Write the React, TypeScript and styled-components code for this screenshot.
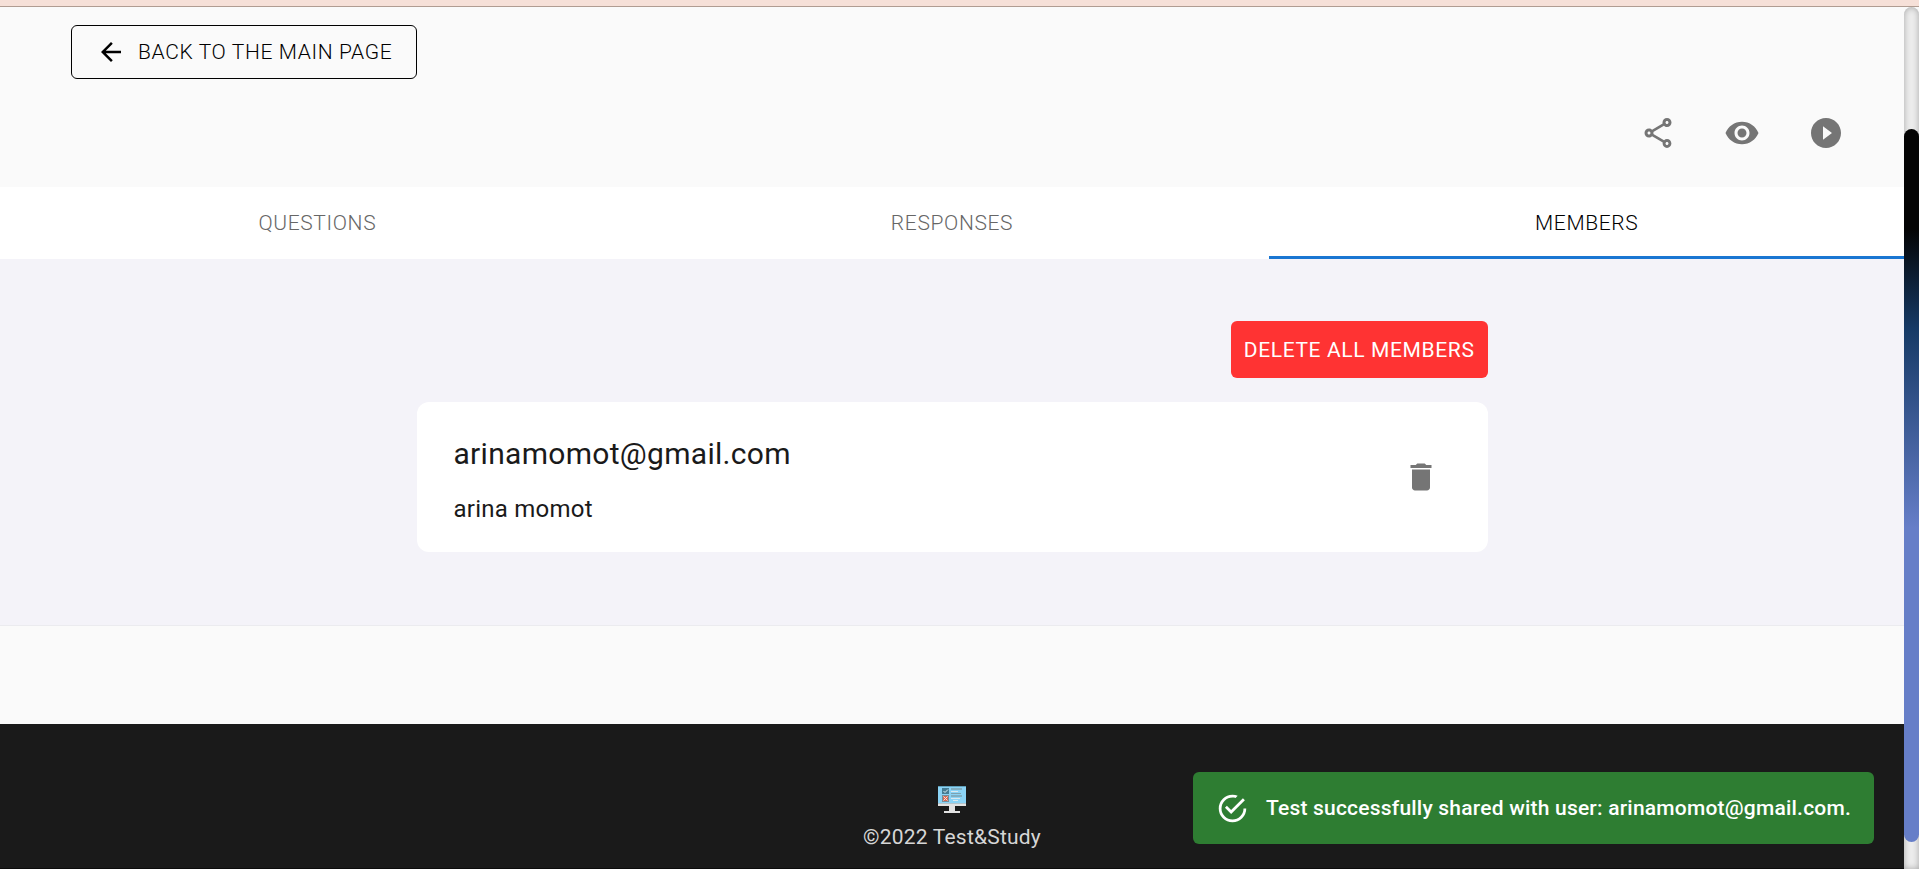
import React from 'react';
import styled, { createGlobalStyle } from 'styled-components';
import { MdArrowBack, MdDelete, MdOutlineShare, MdPlayCircleFilled, MdRemoveRedEye } from 'react-icons/md';

const GlobalStyle = createGlobalStyle`
  *, *::before, *::after { box-sizing: border-box; }
  body {
    margin: 0;
    overflow: hidden;
    background: #fafafa;
    color: #1a1a1a;
    font-family: Roboto, "Liberation Sans", sans-serif;
    font-size: 21px;
  }
  button { font: inherit; cursor: pointer; }
`;

const Shell = styled.div`
  display: flex;
  flex-direction: column;
  height: 100vh;
`;

const TopStrip = styled.div`
  flex: none;
  height: 7px;
  background: #f6e0d8;
  border-bottom: 1px solid #b09c92;
`;

const Viewport = styled.div`
  display: flex;
  flex: 1;
  min-height: 0;
`;

const Page = styled.div`
  display: flex;
  flex-direction: column;
  flex: 1;
  min-width: 0;
  overflow: hidden;
`;

const ScrollTrack = styled.div`
  display: grid;
  grid-template-rows: 122fr 713fr 27fr;
  width: 15px;
  border-radius: 8px 8px 0 0;
  background: #ececec;
  box-shadow: inset 0 0 6px rgba(0, 0, 0, 0.3);
`;

const ScrollThumb = styled.div`
  grid-row: 2;
  border-radius: 8px;
  background: linear-gradient(to top, #667ec8 0%, #667ec8 44%, #163a66 72%, #040404 86%, #040404 100%);
`;

const TopBar = styled.header`
  padding: 18px 48px 0 71px;
`;

const BackButton = styled.button`
  display: flex;
  align-items: center;
  gap: 12px;
  height: 54px;
  padding: 0 24px;
  border: 1px solid #000;
  border-radius: 6px;
  background: transparent;
  color: #000;
  font-weight: 300;
  letter-spacing: 0.03em;
  text-transform: uppercase;
`;

const Actions = styled.div`
  display: flex;
  justify-content: flex-end;
  gap: 24px;
  padding: 24px 0;
`;

const IconButton = styled.button`
  display: flex;
  padding: 12px;
  border: 0;
  border-radius: 50%;
  background: transparent;
  color: #757575;
`;

const Tabs = styled.div`
  display: flex;
  height: 72px;
  background: #fff;
`;

const Tab = styled.button<{ $active?: boolean }>`
  flex: 1;
  padding: 0;
  border: 0;
  background: transparent;
  box-shadow: ${(p) => (p.$active ? 'inset 0 -3px #1976d2' : 'none')};
  color: ${(p) => (p.$active ? '#000' : '#666')};
  font-weight: 300;
  letter-spacing: 0.03em;
  text-transform: uppercase;
`;

const Members = styled.main`
  padding: 62px 0 73px;
  border-bottom: 1px solid #ebebef;
  background: #f4f3f9;
`;

const MembersColumn = styled.div`
  display: flex;
  flex-direction: column;
  align-items: flex-end;
  gap: 24px;
  width: 56.25%;
  margin: 0 auto;
`;

const DeleteAllButton = styled.button`
  height: 57px;
  padding: 0 13px;
  border: 0;
  border-radius: 6px;
  background: #f33;
  color: #fff;
  letter-spacing: 0.03em;
  text-transform: uppercase;
`;

const MemberCard = styled.article`
  display: flex;
  align-items: center;
  justify-content: space-between;
  width: 100%;
  padding: 25px 37px;
  border-radius: 12px;
  background: #fff;
`;

const MemberEmail = styled.h2`
  margin: 0;
  font-size: 30px;
  line-height: 54px;
  font-weight: 400;
  letter-spacing: 0.01em;
`;

const MemberName = styled.p`
  margin: 10px 0 0;
  font-size: 24px;
  line-height: 36px;
  letter-spacing: 0.01em;
`;

const Footer = styled.footer`
  display: flex;
  flex: 1;
  flex-direction: column;
  align-items: center;
  gap: 8px;
  margin-top: 98px;
  padding-top: 60px;
  border-bottom: 1px solid #0c0c0c;
  background: #1a1a1a;
  color: #d6d6d6;
`;

const Copyright = styled.p`
  margin: 0;
  line-height: 30px;
  letter-spacing: 0.01em;
`;

const Toast = styled.div`
  position: fixed;
  right: 45px;
  bottom: 25px;
  display: flex;
  align-items: center;
  gap: 17px;
  height: 72px;
  padding: 0 23px;
  border-radius: 6px;
  background: #2e7d32;
  color: #fff;
  font-weight: 500;
  letter-spacing: 0.01em;
`;

const Logo = () => (
  <svg width="30" height="30" viewBox="0 0 30 30" role="img" aria-label="Test&amp;Study">
    <path fill="#8bd3f5" d="M1 2h28v18H1z" />
    <path fill="#5f9fb9" d="M1 2h28v1H1z" />
    <path fill="#e2e2e2" d="M1 19h28v3H1zM12 22h6v6h-6zM7 27h16v2H7z" />
    <path fill="#b4c4ca" d="M1 19h28v1H1z" />
    <path fill="#447c94" d="M5 4h7v6H5z" />
    <path fill="#d86a55" d="M5 11h7v7H5z" />
    <path fill="none" stroke="#6f8f9c" d="M5.500 11.500h6v6h-6z" />
    <path stroke="#dff0f5" fill="none" d="M6.500 7l1.500 1.500 3-3" />
    <path stroke="#f6ddd8" fill="none" d="M6.500 12.500l4 4m0-4l-4 4" />
    <path stroke="#7da2b0" d="M14 5h11M14 12h11" strokeWidth="1.500" />
    <path stroke="#dce9ee" d="M14 7.500h7M14 14.500h9M16 16.500h5" />
    <path stroke="#7da2b0" d="M14 9.500h10" />
  </svg>
);

const SuccessIcon = () => (
  <svg width="33" height="33" viewBox="0 0 24 24" fill="currentColor" aria-hidden="true">
    <path d="M20,12A8,8 0 0,1 12,20A8,8 0 0,1 4,12A8,8 0 0,1 12,4C12.76,4 13.5,4.11 14.2,4.31L15.77,2.74C14.61,2.26 13.34,2 12,2A10,10 0 0,0 2,12A10,10 0 0,0 12,22A10,10 0 0,0 22,12M7.91,10.08L6.5,11.5L11,16L21,6L19.59,4.58L11,13.17L7.91,10.08Z" />
  </svg>
);

export default function App() {
  return (
    <Shell>
      <GlobalStyle />
      <TopStrip />
      <Viewport>
        <Page>
          <TopBar>
            <BackButton type="button">
              <MdArrowBack size={30} aria-hidden />
              Back to the main page
            </BackButton>
            <Actions>
              <IconButton type="button" aria-label="Share"><MdOutlineShare size={36} /></IconButton>
              <IconButton type="button" aria-label="Preview"><MdRemoveRedEye size={36} /></IconButton>
              <IconButton type="button" aria-label="Start"><MdPlayCircleFilled size={36} /></IconButton>
            </Actions>
          </TopBar>
          <Tabs role="tablist">
            <Tab type="button" role="tab" aria-selected={false}>Questions</Tab>
            <Tab type="button" role="tab" aria-selected={false}>Responses</Tab>
            <Tab type="button" role="tab" aria-selected $active>Members</Tab>
          </Tabs>
          <Members>
            <MembersColumn>
              <DeleteAllButton type="button">Delete all members</DeleteAllButton>
              <MemberCard>
                <div>
                  <MemberEmail>arinamomot@gmail.com</MemberEmail>
                  <MemberName>arina momot</MemberName>
                </div>
                <IconButton type="button" aria-label="Delete member"><MdDelete size={36} /></IconButton>
              </MemberCard>
            </MembersColumn>
          </Members>
          <Footer>
            <Logo />
            <Copyright>©2022 Test&amp;Study</Copyright>
          </Footer>
        </Page>
        <ScrollTrack aria-hidden="true">
          <ScrollThumb />
        </ScrollTrack>
      </Viewport>
      <Toast role="alert">
        <SuccessIcon />
        Test successfully shared with user: arinamomot@gmail.com.
      </Toast>
    </Shell>
  );
}
